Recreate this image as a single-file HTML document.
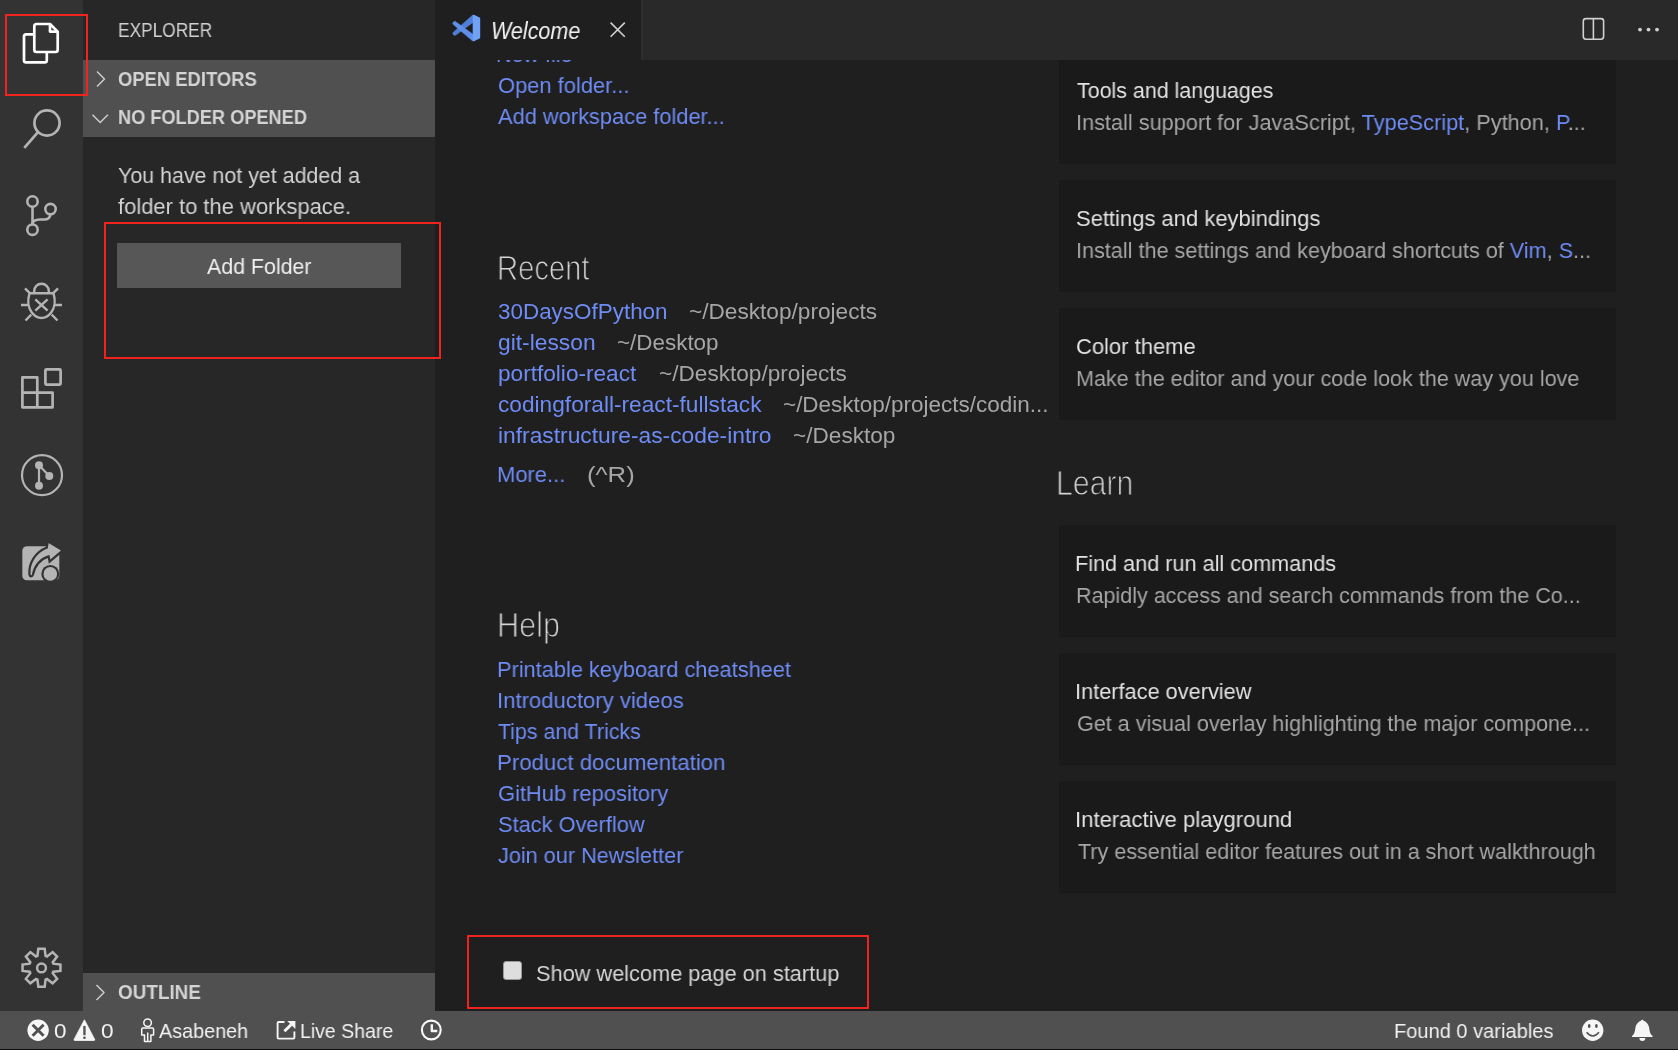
<!DOCTYPE html>
<html><head><meta charset="utf-8"><title>VS Code Welcome</title>
<style>
html,body{margin:0;padding:0;}
body{width:1678px;height:1050px;overflow:hidden;position:relative;background:#1f1f1f;font-family:"Liberation Sans", sans-serif;}
.t{position:absolute;white-space:pre;will-change:transform;transform-origin:0 0;}
svg{position:absolute;overflow:visible;}
</style></head><body>
<div style="position:absolute;left:0px;top:0px;width:83px;height:1011px;background:#333333;"></div>
<div style="position:absolute;left:83px;top:0px;width:352px;height:1011px;background:#272727;"></div>
<div style="position:absolute;left:83px;top:60px;width:352px;height:77px;background:#505050;"></div>
<div style="position:absolute;left:83px;top:973px;width:352px;height:38px;background:#505050;"></div>
<div style="position:absolute;left:0px;top:1011px;width:1678px;height:37.5px;background:#505050;"></div>
<div style="position:absolute;left:0px;top:1048.5px;width:1678px;height:1.5px;background:#111111;"></div>
<div style="position:absolute;left:117px;top:243px;width:284px;height:45px;background:#575757;"></div>
<div style="position:absolute;left:1059px;top:52px;width:557px;height:112px;background:#1a1a1a;"></div>
<div style="position:absolute;left:1059px;top:180px;width:557px;height:112px;background:#1a1a1a;"></div>
<div style="position:absolute;left:1059px;top:308px;width:557px;height:112px;background:#1a1a1a;"></div>
<div style="position:absolute;left:1059px;top:525px;width:557px;height:112px;background:#1a1a1a;"></div>
<div style="position:absolute;left:1059px;top:653px;width:557px;height:112px;background:#1a1a1a;"></div>
<div style="position:absolute;left:1059px;top:781px;width:557px;height:112px;background:#1a1a1a;"></div>
<div style="position:absolute;left:503px;top:961px;width:19px;height:19px;background:#dedede;border-radius:3px;box-sizing:border-box;border:1px solid #9a9a9a;"></div>
<div class="t" style="left:496.00px;top:44.00px;font-size:22.4px;line-height:22.4px;color:#6f8cf5;font-weight:400;font-style:normal;transform:scaleX(0.9600);">New file</div>
<div class="t" style="left:118.00px;top:21.00px;font-size:19.7px;line-height:19.7px;color:#d0d0d0;font-weight:400;font-style:normal;transform:scaleX(0.8790);">EXPLORER</div>
<div class="t" style="left:118.00px;top:70.00px;font-size:19.3px;line-height:19.3px;color:#d4d4d4;font-weight:700;font-style:normal;transform:scaleX(0.9549);">OPEN EDITORS</div>
<div class="t" style="left:118.00px;top:108.00px;font-size:19.3px;line-height:19.3px;color:#d4d4d4;font-weight:700;font-style:normal;transform:scaleX(0.9432);">NO FOLDER OPENED</div>
<div class="t" style="left:118.00px;top:165.00px;font-size:22.4px;line-height:22.4px;color:#d2d2d2;font-weight:400;font-style:normal;transform:scaleX(0.9561);">You have not yet added a</div>
<div class="t" style="left:118.00px;top:196.00px;font-size:22.4px;line-height:22.4px;color:#d2d2d2;font-weight:400;font-style:normal;transform:scaleX(0.9805);">folder to the workspace.</div>
<div class="t" style="left:207.00px;top:256.00px;font-size:22.4px;line-height:22.4px;color:#f0f0f0;font-weight:400;font-style:normal;transform:scaleX(0.9541);">Add Folder</div>
<div class="t" style="left:118.00px;top:983.00px;font-size:19.3px;line-height:19.3px;color:#d4d4d4;font-weight:700;font-style:normal;transform:scaleX(0.9795);">OUTLINE</div>
<div class="t" style="left:498.00px;top:75.00px;font-size:22.4px;line-height:22.4px;color:#6f8cf5;font-weight:400;font-style:normal;transform:scaleX(0.9780);">Open folder...</div>
<div class="t" style="left:498.00px;top:106.00px;font-size:22.4px;line-height:22.4px;color:#6f8cf5;font-weight:400;font-style:normal;transform:scaleX(0.9745);">Add workspace folder...</div>
<div class="t" style="left:497.00px;top:251.00px;font-size:34.6px;line-height:34.6px;color:#d6d6d6;font-weight:400;font-style:normal;transform:scaleX(0.8434);-webkit-text-stroke:1.1px #1f1f1f;">Recent</div>
<div class="t" style="left:498.00px;top:301.00px;font-size:22.4px;line-height:22.4px;color:#6f8cf5;font-weight:400;font-style:normal;transform:scaleX(1.0018);">30DaysOfPython</div>
<div class="t" style="left:689.00px;top:301.00px;font-size:22.4px;line-height:22.4px;color:#a6a6a6;font-weight:400;font-style:normal;transform:scaleX(1.0109);">~/Desktop/projects</div>
<div class="t" style="left:498.00px;top:332.00px;font-size:22.4px;line-height:22.4px;color:#6f8cf5;font-weight:400;font-style:normal;transform:scaleX(1.0181);">git-lesson</div>
<div class="t" style="left:617.00px;top:332.00px;font-size:22.4px;line-height:22.4px;color:#a6a6a6;font-weight:400;font-style:normal;transform:scaleX(1.0010);">~/Desktop</div>
<div class="t" style="left:498.00px;top:363.00px;font-size:22.4px;line-height:22.4px;color:#6f8cf5;font-weight:400;font-style:normal;transform:scaleX(1.0103);">portfolio-react</div>
<div class="t" style="left:659.00px;top:363.00px;font-size:22.4px;line-height:22.4px;color:#a6a6a6;font-weight:400;font-style:normal;transform:scaleX(1.0098);">~/Desktop/projects</div>
<div class="t" style="left:498.00px;top:394.00px;font-size:22.4px;line-height:22.4px;color:#6f8cf5;font-weight:400;font-style:normal;transform:scaleX(1.0131);">codingforall-react-fullstack</div>
<div class="t" style="left:783.00px;top:394.00px;font-size:22.4px;line-height:22.4px;color:#a6a6a6;font-weight:400;font-style:normal;transform:scaleX(1.0038);">~/Desktop/projects/codin...</div>
<div class="t" style="left:498.00px;top:425.00px;font-size:22.4px;line-height:22.4px;color:#6f8cf5;font-weight:400;font-style:normal;transform:scaleX(1.0176);">infrastructure-as-code-intro</div>
<div class="t" style="left:793.00px;top:425.00px;font-size:22.4px;line-height:22.4px;color:#a6a6a6;font-weight:400;font-style:normal;transform:scaleX(1.0100);">~/Desktop</div>
<div class="t" style="left:497.00px;top:464.00px;font-size:22.4px;line-height:22.4px;color:#6f8cf5;font-weight:400;font-style:normal;transform:scaleX(0.9803);">More...</div>
<div class="t" style="left:587.00px;top:464.00px;font-size:22.4px;line-height:22.4px;color:#a6a6a6;font-weight:400;font-style:normal;transform:scaleX(1.1475);">(^R)</div>
<div class="t" style="left:497.00px;top:608.00px;font-size:34.6px;line-height:34.6px;color:#d6d6d6;font-weight:400;font-style:normal;transform:scaleX(0.8848);-webkit-text-stroke:1.1px #1f1f1f;">Help</div>
<div class="t" style="left:497.00px;top:659.00px;font-size:22.4px;line-height:22.4px;color:#6f8cf5;font-weight:400;font-style:normal;transform:scaleX(0.9718);">Printable keyboard cheatsheet</div>
<div class="t" style="left:497.00px;top:690.00px;font-size:22.4px;line-height:22.4px;color:#6f8cf5;font-weight:400;font-style:normal;transform:scaleX(0.9872);">Introductory videos</div>
<div class="t" style="left:498.00px;top:721.00px;font-size:22.4px;line-height:22.4px;color:#6f8cf5;font-weight:400;font-style:normal;transform:scaleX(0.9537);">Tips and Tricks</div>
<div class="t" style="left:497.00px;top:752.00px;font-size:22.4px;line-height:22.4px;color:#6f8cf5;font-weight:400;font-style:normal;transform:scaleX(0.9921);">Product documentation</div>
<div class="t" style="left:498.00px;top:783.00px;font-size:22.4px;line-height:22.4px;color:#6f8cf5;font-weight:400;font-style:normal;transform:scaleX(0.9775);">GitHub repository</div>
<div class="t" style="left:498.00px;top:814.00px;font-size:22.4px;line-height:22.4px;color:#6f8cf5;font-weight:400;font-style:normal;transform:scaleX(0.9733);">Stack Overflow</div>
<div class="t" style="left:498.00px;top:845.00px;font-size:22.4px;line-height:22.4px;color:#6f8cf5;font-weight:400;font-style:normal;transform:scaleX(0.9672);">Join our Newsletter</div>
<div class="t" style="left:1056.00px;top:466.00px;font-size:34.6px;line-height:34.6px;color:#d6d6d6;font-weight:400;font-style:normal;transform:scaleX(0.8735);-webkit-text-stroke:1.1px #1f1f1f;">Learn</div>
<div class="t" style="left:536.00px;top:963.00px;font-size:22.4px;line-height:22.4px;color:#d6d6d6;font-weight:400;font-style:normal;transform:scaleX(0.9711);">Show welcome page on startup</div>
<div class="t" style="left:54.00px;top:1021.00px;font-size:20.6px;line-height:20.6px;color:#f2f2f2;font-weight:400;font-style:normal;transform:scaleX(1.0900);">0</div>
<div class="t" style="left:101.00px;top:1021.00px;font-size:20.6px;line-height:20.6px;color:#f2f2f2;font-weight:400;font-style:normal;transform:scaleX(1.1000);">0</div>
<div class="t" style="left:159.00px;top:1021.00px;font-size:20.6px;line-height:20.6px;color:#f2f2f2;font-weight:400;font-style:normal;transform:scaleX(0.9609);">Asabeneh</div>
<div class="t" style="left:300.00px;top:1021.00px;font-size:20.6px;line-height:20.6px;color:#f2f2f2;font-weight:400;font-style:normal;transform:scaleX(0.9464);">Live Share</div>
<div class="t" style="left:1394.00px;top:1021.00px;font-size:20.6px;line-height:20.6px;color:#f2f2f2;font-weight:400;font-style:normal;transform:scaleX(0.9735);">Found 0 variables</div>
<div class="t" style="left:1077.00px;top:80.00px;font-size:22.4px;line-height:22.4px;color:#e2e2e2;font-weight:400;font-style:normal;transform:scaleX(0.9561);">Tools and languages</div>
<div class="t" style="left:1076.00px;top:112.00px;font-size:22.4px;line-height:22.4px;color:#a6a6a6;font-weight:400;font-style:normal;transform:scaleX(0.9697);">Install support for JavaScript, <span style="color:#6f8cf5">TypeScript</span>, Python, <span style="color:#6f8cf5">P</span>...</div>
<div class="t" style="left:1076.00px;top:208.00px;font-size:22.4px;line-height:22.4px;color:#e2e2e2;font-weight:400;font-style:normal;transform:scaleX(0.9818);">Settings and keybindings</div>
<div class="t" style="left:1076.00px;top:240.00px;font-size:22.4px;line-height:22.4px;color:#a6a6a6;font-weight:400;font-style:normal;transform:scaleX(0.9655);">Install the settings and keyboard shortcuts of <span style="color:#6f8cf5">Vim</span>, <span style="color:#6f8cf5">S</span>...</div>
<div class="t" style="left:1076.00px;top:336.00px;font-size:22.4px;line-height:22.4px;color:#e2e2e2;font-weight:400;font-style:normal;transform:scaleX(0.9817);">Color theme</div>
<div class="t" style="left:1076.00px;top:368.00px;font-size:22.4px;line-height:22.4px;color:#a6a6a6;font-weight:400;font-style:normal;transform:scaleX(0.9629);">Make the editor and your code look the way you love</div>
<div class="t" style="left:1075.00px;top:553.00px;font-size:22.4px;line-height:22.4px;color:#e2e2e2;font-weight:400;font-style:normal;transform:scaleX(0.9670);">Find and run all commands</div>
<div class="t" style="left:1076.00px;top:585.00px;font-size:22.4px;line-height:22.4px;color:#a6a6a6;font-weight:400;font-style:normal;transform:scaleX(0.9610);">Rapidly access and search commands from the Co...</div>
<div class="t" style="left:1075.00px;top:681.00px;font-size:22.4px;line-height:22.4px;color:#e2e2e2;font-weight:400;font-style:normal;transform:scaleX(0.9711);">Interface overview</div>
<div class="t" style="left:1077.00px;top:713.00px;font-size:22.4px;line-height:22.4px;color:#a6a6a6;font-weight:400;font-style:normal;transform:scaleX(0.9630);">Get a visual overlay highlighting the major compone...</div>
<div class="t" style="left:1075.00px;top:809.00px;font-size:22.4px;line-height:22.4px;color:#e2e2e2;font-weight:400;font-style:normal;transform:scaleX(0.9862);">Interactive playground</div>
<div class="t" style="left:1078.00px;top:841.00px;font-size:22.4px;line-height:22.4px;color:#a6a6a6;font-weight:400;font-style:normal;transform:scaleX(0.9622);">Try essential editor features out in a short walkthrough</div>
<div style="position:absolute;left:435px;top:0px;width:1243px;height:60px;background:#292929;"></div>
<div style="position:absolute;left:435px;top:0px;width:206px;height:60px;background:#1f1f1f;"></div>
<div style="position:absolute;left:641px;top:0px;width:2px;height:60px;background:#2f2f2f;"></div>
<div class="t" style="left:491.00px;top:20.00px;font-size:23.3px;line-height:23.3px;color:#f4f4f4;font-weight:400;font-style:italic;transform:scaleX(0.9234);">Welcome</div>
<svg width="1678" height="1050" style="left:0;top:0" viewBox="0 0 1678 1050">
<g fill="none" stroke-linecap="butt" stroke-linejoin="round">
 <!-- explorer -->
 <g stroke="#ffffff" stroke-width="2.7">
  <path d="M34.3,26.2 Q34.3,24 36.5,24 H50 L57.7,31.6 V49.8 Q57.7,52 55.5,52 H36.5 Q34.3,52 34.3,49.8 Z"/>
  <path d="M50,24 V31.6 H57.7"/>
  <path d="M34.3,34.3 H26.2 Q24,34.3 24,36.5 V60.2 Q24,62.4 26.2,62.4 H44.6 Q46.8,62.4 46.8,60.2 V52"/>
 </g>
 <!-- search -->
 <g stroke="#b4b4b4" stroke-width="2.7">
  <circle cx="47" cy="123" r="12.6"/>
  <path d="M38.2,131.9 L24.3,147.9"/>
 </g>
 <!-- scm -->
 <g stroke="#b4b4b4" stroke-width="2.6">
  <circle cx="32.5" cy="201.5" r="5.2"/>
  <circle cx="50.5" cy="209.1" r="5.2"/>
  <circle cx="32.5" cy="229.7" r="5.2"/>
  <path d="M32.5,206.7 V224.5"/>
  <path d="M50.5,214.3 C50,218.6 47.5,219.5 44,219.5 H40 C35.5,219.5 32.5,221 32.5,224.5"/>
 </g>
 <!-- debug -->
 <g stroke="#b4b4b4" stroke-width="2.4">
  <path d="M34.2,293.3 V291 A7.3,7.3 0 0 1 48.8,291 V293.3"/>
  <path d="M29.5,293.3 H53.5 C55.3,299 55.3,307 51.2,312.5 C48.3,316.3 45,318 41.5,318 C38,318 34.7,316.3 31.8,312.5 C27.7,307 27.7,299 29.5,293.3 Z"/>
  <path d="M25,288.3 L29.8,293.2 M58,288.3 L53.2,293.2 M21,305 H28 M55,305 H62 M25.5,320.5 L31.3,314.7 M57.5,320.5 L51.7,314.7"/>
  <path d="M35.3,299.3 L47.6,310.7 M47.6,299.3 L35.3,310.7"/>
 </g>
 <!-- extensions -->
 <g stroke="#b4b4b4" stroke-width="2.7">
  <path d="M37.3,392.7 V377.4 H22.4 V407.3 H52.6 V392.7 H22.4"/>
  <path d="M37.3,392.7 V407.3"/>
  <rect x="45.4" y="369.4" width="15.2" height="15.2" rx="1"/>
 </g>
 <!-- git graph -->
 <g stroke="#b4b4b4" stroke-width="2.2">
  <circle cx="42" cy="475.2" r="20"/>
  <path d="M39,465.3 V485.7 M39,465.3 L49.3,476"/>
 </g>
 <g fill="#b4b4b4">
  <circle cx="39" cy="465.3" r="4"/>
  <circle cx="49.3" cy="476" r="4"/>
  <circle cx="39" cy="485.7" r="4"/>
 </g>
 <!-- live share -->
 <rect x="22.3" y="546.3" width="37" height="34" rx="4.5" fill="#b4b4b4"/>
 <path d="M29.4,574.6 C28.6,563 35,552.5 46.8,547.6 L47.8,541.4 L62.8,550.4 L49.6,561.6 L48.6,556.4 C40.5,559 34.8,566 32.8,575 C32.2,576.8 29.8,576.8 29.4,574.6 Z" fill="#b4b4b4" stroke="#333333" stroke-width="2.2" stroke-linejoin="miter"/>
 <circle cx="50.3" cy="573.9" r="9.0" fill="#333333"/>
 <circle cx="50.3" cy="573.9" r="6.8" fill="#b4b4b4"/>
 <!-- gear -->
 <g stroke="#b4b4b4" stroke-width="2.5" stroke-linejoin="miter">
  <polygon points="37.43,955.88 38.33,948.76 44.67,948.76 45.57,955.88 46.98,956.47 52.65,952.07 57.13,956.55 52.73,962.22 53.32,963.63 60.44,964.53 60.44,970.87 53.32,971.77 52.73,973.18 57.13,978.85 52.65,983.33 46.98,978.93 45.57,979.52 44.67,986.64 38.33,986.64 37.43,979.52 36.02,978.93 30.35,983.33 25.87,978.85 30.27,973.18 29.68,971.77 22.56,970.87 22.56,964.53 29.68,963.63 30.27,962.22 25.87,956.55 30.35,952.07 36.02,956.47"/>
  <circle cx="41.5" cy="967.9" r="4.4"/>
 </g>
 <!-- chevrons -->
 <g stroke="#cccccc" stroke-width="1.5">
  <path d="M97,71.5 L104.5,79 L97,86.5"/>
  <path d="M92.5,114.8 L100.2,122.5 L107.9,114.8"/>
  <path d="M96.5,985 L104,992.5 L96.5,1000"/>
 </g>
 <!-- vscode logo -->
 <path d="M472.7,15.1 L473.6,22 L455.8,35 Q454.6,35.8 453.6,34.9 L453,34 Q452.4,33 453.4,32.2 Z" fill="#4f7fd6" stroke="#4f7fd6" stroke-width="0.6" stroke-linejoin="round"/>
 <path d="M455.4,21.6 L473.6,34.7 L472.7,41 L453.4,24.6 Q452.4,23.8 453,22.8 L453.6,21.9 Q454.4,21 455.4,21.6 Z" fill="#5f8fe8" stroke="#5f8fe8" stroke-width="0.6" stroke-linejoin="round"/>
 <path d="M472.7,15 Q473.6,14.6 474.5,15.1 L479.6,17.6 Q480.2,18 480.2,18.8 V37.3 Q480.2,38 479.6,38.4 L474.5,40.9 Q473.6,41.4 472.7,41 Z" fill="#6ea2f6"/>
 <!-- close X -->
 <path d="M610.6,22.6 L624.8,36.8 M624.8,22.6 L610.6,36.8" stroke="#cfcfcf" stroke-width="1.6"/>
 <!-- split -->
 <rect x="1583.3" y="18.6" width="20.3" height="20.6" rx="2.6" stroke="#d0d0d0" stroke-width="1.6"/>
 <path d="M1593.4,18.6 V39.2" stroke="#d0d0d0" stroke-width="1.6"/>
 <g fill="#d0d0d0">
  <circle cx="1640" cy="29.6" r="1.9"/><circle cx="1648.5" cy="29.6" r="1.9"/><circle cx="1657" cy="29.6" r="1.9"/>
 </g>
 <!-- status: error -->
 <circle cx="38.1" cy="1030.2" r="10.7" fill="#f6f6f6"/>
 <path d="M32.6,1024.7 L43.6,1035.7 M43.6,1024.7 L32.6,1035.7" stroke="#505050" stroke-width="2.9"/>
 <!-- warning -->
 <path d="M84.4,1019.8 L94.6,1039.2 Q95.2,1040.5 93.8,1040.5 H75 Q73.6,1040.5 74.2,1039.2 Z" fill="#f6f6f6" stroke="#f6f6f6" stroke-width="0.8" stroke-linejoin="round"/>
 <rect x="83.3" y="1026" width="2.3" height="9.2" fill="#505050"/>
 <circle cx="84.45" cy="1037.7" r="1.3" fill="#505050"/>
 <!-- person -->
 <g stroke="#f6f6f6" stroke-width="1.5" fill="none">
  <circle cx="147.6" cy="1022.8" r="3.8"/>
  <path d="M141.7,1035 V1029.2 Q141.7,1028 142.9,1028 H152.4 Q153.6,1028 153.6,1029.2 V1035 H150.9 V1041.6 H144.5 V1035 Z"/>
  <path d="M147.7,1032.5 V1041.6"/>
 </g>
 <!-- live share status -->
 <g stroke="#f6f6f6" stroke-width="1.9" fill="none" stroke-linejoin="round">
  <path d="M284.5,1022 H278.6 Q277.6,1022 277.6,1023 V1037.6 Q277.6,1038.6 278.6,1038.6 H293.4 Q294.4,1038.6 294.4,1037.6 V1031.5"/>
  <path d="M284.4,1031.2 L291.2,1024.6" stroke-width="2.9"/>
 </g>
 <path d="M287.2,1020.9 H295.4 V1029.1 Z" fill="#f6f6f6"/>
 <!-- clock -->
 <circle cx="431.3" cy="1030" r="9.4" stroke="#f6f6f6" stroke-width="2.1"/>
 <path d="M431.8,1024.2 V1031 H437.3" stroke="#f6f6f6" stroke-width="2.4"/>
 <!-- smiley -->
 <circle cx="1592.7" cy="1030.2" r="10.7" fill="#f6f6f6"/>
 <ellipse cx="1589.2" cy="1026" rx="1.35" ry="2" fill="#505050"/>
 <ellipse cx="1596.4" cy="1026" rx="1.35" ry="2" fill="#505050"/>
 <path d="M1586.6,1032.2 Q1592.7,1039.6 1599,1032.2" stroke="#505050" stroke-width="1.5"/>
 <!-- bell -->
 <path d="M1642.3,1019.6 C1640,1021.6 1636.6,1022.6 1635.6,1027 C1634.9,1030 1635,1033 1633.1,1035 L1632,1036 V1037 H1652.6 V1036 L1651.5,1035 C1649.6,1033 1649.7,1030 1649,1027 C1648,1022.6 1644.6,1021.6 1642.3,1019.6 Z" fill="#f6f6f6"/>
 <path d="M1639.4,1038 H1645.3 Q1645.3,1041 1642.35,1041 Q1639.4,1041 1639.4,1038 Z" fill="#f6f6f6"/>
</g>
</svg>
<div style="position:absolute;left:5.4px;top:13.6px;width:82.7px;height:82.4px;box-sizing:border-box;border:2.4px solid #f0241e;"></div>
<div style="position:absolute;left:103.5px;top:222px;width:337.5px;height:137px;box-sizing:border-box;border:2.4px solid #f0241e;"></div>
<div style="position:absolute;left:466.6px;top:934.8px;width:402px;height:74.6px;box-sizing:border-box;border:2.4px solid #f0241e;"></div>
</body></html>
